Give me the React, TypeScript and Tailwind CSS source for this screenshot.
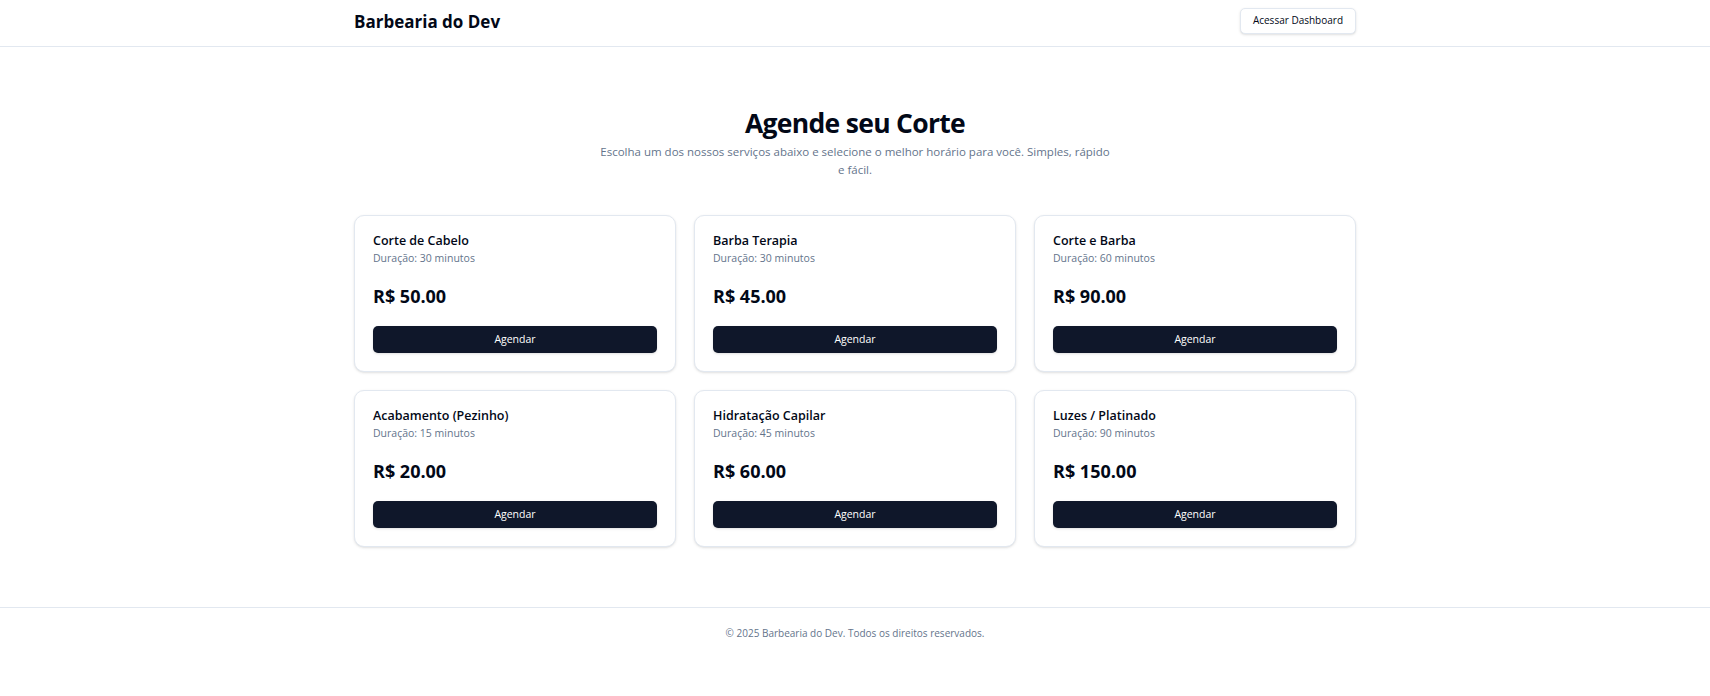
import React from "react";

const services = [
  { name: "Corte de Cabelo", duration: 30, price: "50.00" },
  { name: "Barba Terapia", duration: 30, price: "45.00" },
  { name: "Corte e Barba", duration: 60, price: "90.00" },
  { name: "Acabamento (Pezinho)", duration: 15, price: "20.00" },
  { name: "Hidratação Capilar", duration: 45, price: "60.00" },
  { name: "Luzes / Platinado", duration: 90, price: "150.00" },
];

function ServiceCard({ name, duration, price }: { name: string; duration: number; price: string }) {
  return (
    <div className="flex flex-col gap-[18px] rounded-[10px] border border-[#e2e8f0] bg-white p-[18px] shadow-[0_1px_3px_rgba(0,0,0,0.1),0_1px_2px_-1px_rgba(0,0,0,0.1)]">
      <div className="flex flex-col gap-[4px]">
        <h3 className="text-[12.5px] font-semibold leading-[13px] text-[#020817]">{name}</h3>
        <p className="text-[10.5px] leading-[15px] text-[#64748b]">Duração: {duration} minutos</p>
      </div>
      <div>
        <p className="text-[18px] font-bold leading-[24px] text-[#020817]">R$ {price}</p>
      </div>
      <div>
        <button className="flex h-[27px] w-full items-center justify-center rounded-[5px] bg-[#0f172a] text-[10.5px] font-medium text-white shadow-sm">
          Agendar
        </button>
      </div>
    </div>
  );
}

export default function App() {
  return (
    <div className="min-h-screen bg-white font-['Open_Sans','Noto_Sans',sans-serif] text-[#020817]">
      <header className="h-[47px] border-b border-[#e2e8f0] pt-[7px]">
        <div className="mx-auto flex h-[27px] max-w-[1002px] items-center justify-between">
          <h1 className="mt-[3px] text-[17px] font-bold leading-[24px]">Barbearia do Dev</h1>
          <button className="h-[26px] rounded-[5px] border border-[#e2e8f0] bg-white px-[12px] text-[10px] font-medium text-[#020817] shadow-sm">
            Acessar Dashboard
          </button>
        </div>
      </header>

      <main className="pt-[61px] pb-[60px]">
        <div className="mx-auto max-w-[1002px]">
          <div className="text-center">
            <h2 className="text-[26.5px] font-bold leading-[30px] tracking-[-0.7px]">Agende seu Corte</h2>
            <p className="mx-auto mt-[5px] max-w-[512px] text-[11.5px] leading-[18px] text-[#64748b]">
              Escolha um dos nossos serviços abaixo e selecione o melhor horário para você. Simples, rápido e fácil.
            </p>
          </div>
          <div className="mt-[36px] grid grid-cols-3 gap-[18px]">
            {services.map((s) => (
              <ServiceCard key={s.name} {...s} />
            ))}
          </div>
        </div>
      </main>

      <footer className="border-t border-[#e2e8f0] py-[18px]">
        <p className="text-center text-[10px] leading-[15px] text-[#64748b]">
          © 2025 Barbearia do Dev. Todos os direitos reservados.
        </p>
      </footer>
    </div>
  );
}
